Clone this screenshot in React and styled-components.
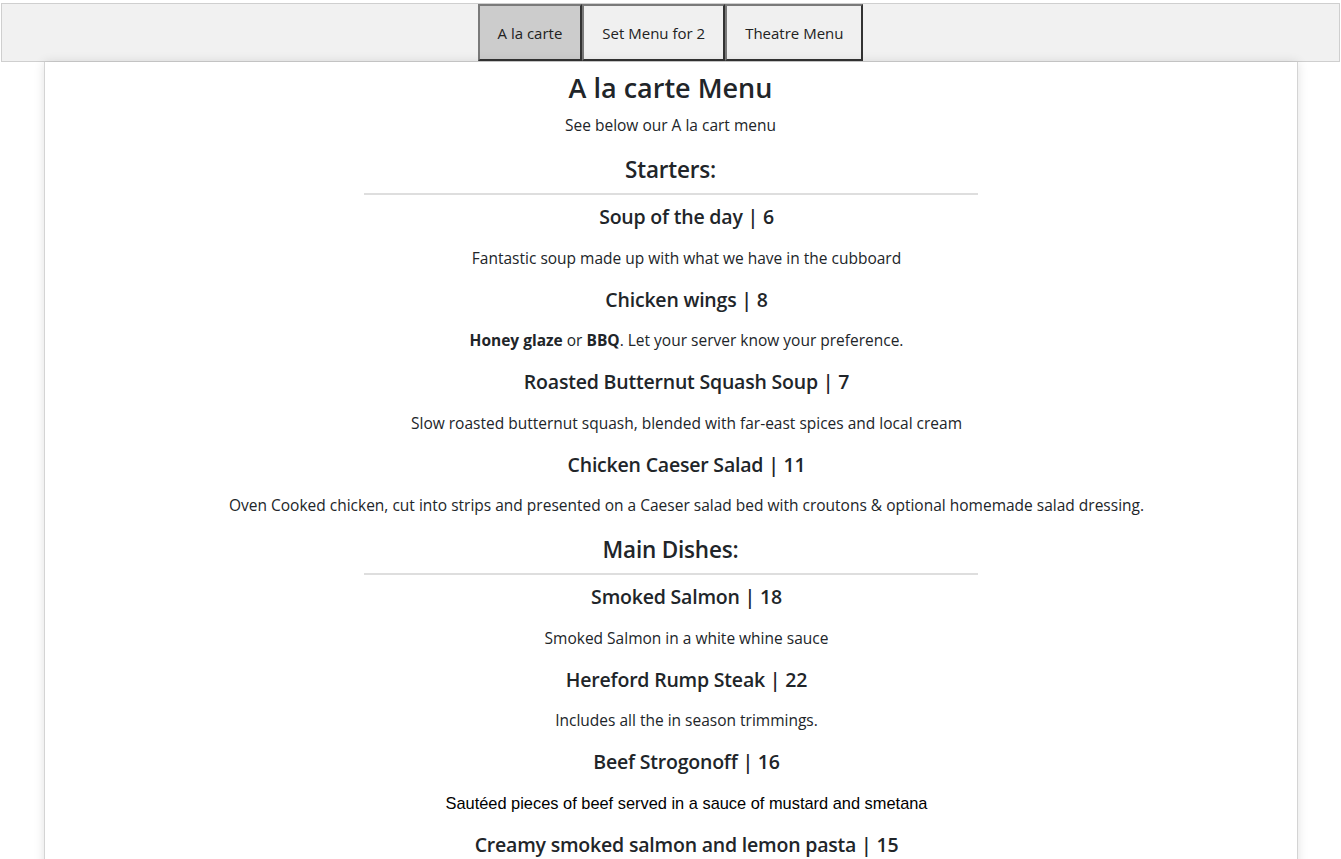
import React, { useState } from 'react'
import styled, { createGlobalStyle } from 'styled-components'

/* Global */
const GlobalStyle = createGlobalStyle`
  html, body {
    margin: 0;
    padding: 0;
    background: #fff;
  }
  body {
    font-family: 'Open Sans', 'Noto Sans', sans-serif;
    color: #212529;
    overflow: hidden;
  }
`

/* Styled */
const Page = styled.div`
  display: flex;
  flex-direction: column;
  align-items: center;
  min-height: 100vh;
`

const TabBar = styled.nav`
  align-self: stretch;
  display: flex;
  justify-content: center;
  margin: 3px 1px 0 1px;
  height: 57px;
  padding: 0;
  background: #f1f1f1;
  border: 1px solid #cfcfcf;
`

const TabButton = styled.button`
  font-family: 'Open Sans', 'Noto Sans', sans-serif;
  font-size: 15px;
  color: #222;
  padding: 0 18px;
  height: 57px;
  background: ${(p) => (p.$active ? '#cccccc' : '#f0f0f0')};
  border-style: solid;
  border-width: 2px;
  border-color: #7a7a7a #333 #333 #7a7a7a;
  cursor: pointer;
  margin: 0;
`

const Card = styled.main`
  width: 1254px;
  flex: 1;
  background: #fff;
  border-left: 1px solid #d4d4d4;
  border-right: 1px solid #d4d4d4;
  box-shadow: 0 0 10px rgba(0, 0, 0, 0.12);
  display: flex;
  flex-direction: column;
  align-items: center;
  text-align: center;
  padding-top: 9px;
  box-sizing: border-box;
`

const Title = styled.h1`
  font-size: 27px;
  font-weight: 600;
  line-height: 34px;
  margin: 0;
`

const Intro = styled.p`
  font-size: 15.5px;
  line-height: 24px;
  margin: 8px 0 0 0;
`

const SectionHeading = styled.h2`
  font-size: 22.5px;
  font-weight: 600;
  line-height: 30px;
  margin: 18px 0 0 0;
  letter-spacing: -0.2px;
`

const Rule = styled.hr`
  width: 614px;
  border: 0;
  border-top: 2px solid #dedede;
  margin: 8px 0 0 0;
`

const DishList = styled.ul`
  list-style: none;
  align-self: stretch;
  margin: 0;
  padding: 0 0 0 32px;
  display: flex;
  flex-direction: column;
  align-items: center;
`

const Dish = styled.li`
  display: flex;
  flex-direction: column;
  align-items: center;
`

const DishName = styled.h3`
  font-size: 19.5px;
  font-weight: 600;
  line-height: 24px;
  margin: ${(p) => (p.$first ? '10px' : '18px')} 0 0 0;
  letter-spacing: -0.2px;
`

const DishText = styled.p`
  font-size: ${(p) => (p.$arial ? '16.4px' : '15.5px')};
  line-height: 24px;
  margin: 16.5px 0 0 0;
  font-family: ${(p) => (p.$arial ? "'Liberation Sans', Arial, sans-serif" : 'inherit')};
  color: ${(p) => (p.$arial ? '#000' : 'inherit')};
  b {
    font-weight: 700;
  }
`

const menu = [
  {
    heading: 'Starters:',
    dishes: [
      { name: 'Soup of the day | 6', text: 'Fantastic soup made up with what we have in the cubboard' },
      {
        name: 'Chicken wings | 8',
        text: (
          <>
            <b>Honey glaze</b> or <b>BBQ</b>. Let your server know your preference.
          </>
        ),
      },
      {
        name: 'Roasted Butternut Squash Soup | 7',
        text: 'Slow roasted butternut squash, blended with far-east spices and local cream',
      },
      {
        name: 'Chicken Caeser Salad | 11',
        text: 'Oven Cooked chicken, cut into strips and presented on a Caeser salad bed with croutons & optional homemade salad dressing.',
      },
    ],
  },
  {
    heading: 'Main Dishes:',
    dishes: [
      { name: 'Smoked Salmon | 18', text: 'Smoked Salmon in a white whine sauce' },
      { name: 'Hereford Rump Steak | 22', text: 'Includes all the in season trimmings.' },
      {
        name: 'Beef Strogonoff | 16',
        text: 'Sautéed pieces of beef served in a sauce of mustard and smetana',
        arial: true,
      },
      { name: 'Creamy smoked salmon and lemon pasta | 15', text: 'Smoked salmon, lemon and cream tossed through fresh pasta' },
    ],
  },
]

const tabs = ['A la carte', 'Set Menu for 2', 'Theatre Menu']

const App = () => {
  const [active, setActive] = useState(0)
  return (
    <Page>
      <GlobalStyle />
      <TabBar>
        {tabs.map((t, i) => (
          <TabButton key={t} $active={active === i} onClick={() => setActive(i)}>
            {t}
          </TabButton>
        ))}
      </TabBar>
      <Card>
        <Title>A la carte Menu</Title>
        <Intro>See below our A la cart menu</Intro>
        {menu.map((section) => (
          <React.Fragment key={section.heading}>
            <SectionHeading>{section.heading}</SectionHeading>
            <Rule />
            <DishList>
              {section.dishes.map((d, i) => (
                <Dish key={d.name}>
                  <DishName $first={i === 0}>{d.name}</DishName>
                  <DishText $arial={d.arial}>{d.text}</DishText>
                </Dish>
              ))}
            </DishList>
          </React.Fragment>
        ))}
      </Card>
    </Page>
  )
}

export default App
